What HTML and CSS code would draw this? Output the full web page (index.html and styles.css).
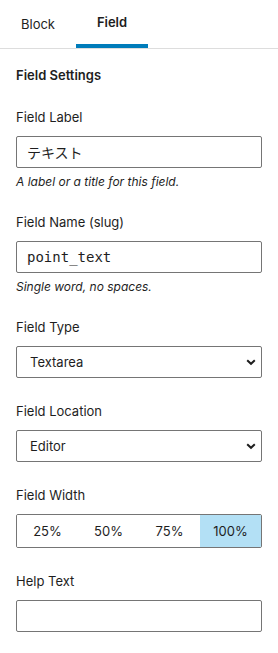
FILE: index.html
```html
<!DOCTYPE html>
<html lang="ja">
<head>
    <meta charset="UTF-8">
    <meta name="viewport" content="width=device-width, initial-scale=1.0">
    <title>Field Settings</title>
    <link rel="stylesheet" href="styles.css">
</head>
<body>
    <div class="sidebar">
        <div class="tabs">
            <button class="tab tab-block">Block</button>
            <button class="tab tab-field active">Field</button>
        </div>

        <div class="panel">
            <h2 class="panel-title">Field Settings</h2>

            <div class="control">
                <label class="control-label" for="fieldLabel">Field Label</label>
                <input class="text-input" id="fieldLabel" type="text" value="テキスト">
                <p class="control-help">A label or a title for this field.</p>
            </div>

            <div class="control">
                <label class="control-label" for="fieldName">Field Name (slug)</label>
                <textarea class="text-input mono" id="fieldName" rows="1" spellcheck="false">point_text</textarea>
                <p class="control-help">Single word, no spaces.</p>
            </div>

            <div class="control">
                <label class="control-label" for="fieldType">Field Type</label>
                <div class="select-wrap">
                    <select class="select-input" id="fieldType">
                        <option>Textarea</option>
                    </select>
                    <svg class="chevron" width="10" height="7" viewBox="0 0 10 7">
                        <path d="M1.2 1.2 L5 4.8 L8.8 1.2" fill="none" stroke="#1e1e1e" stroke-width="2"/>
                    </svg>
                </div>
            </div>

            <div class="control">
                <label class="control-label" for="fieldLocation">Field Location</label>
                <div class="select-wrap">
                    <select class="select-input" id="fieldLocation">
                        <option>Editor</option>
                    </select>
                    <svg class="chevron" width="10" height="7" viewBox="0 0 10 7">
                        <path d="M1.2 1.2 L5 4.8 L8.8 1.2" fill="none" stroke="#1e1e1e" stroke-width="2"/>
                    </svg>
                </div>
            </div>

            <div class="control">
                <span class="control-label">Field Width</span>
                <div class="button-group">
                    <button class="seg">25%</button>
                    <button class="seg">50%</button>
                    <button class="seg">75%</button>
                    <button class="seg selected">100%</button>
                </div>
            </div>

            <div class="control">
                <label class="control-label" for="helpText">Help Text</label>
                <input class="text-input" id="helpText" type="text" value="">
            </div>
        </div>
    </div>
</body>
</html>
```

FILE: styles.css
```css
:root {
    --text: #1e1e1e;
    --border: #757575;
    --blue: #007cba;
    --selected: #b3e0f5;
}

* {
    margin: 0;
    padding: 0;
    box-sizing: border-box;
}

body {
    background: #fff;
    color: var(--text);
    font-family: Inter, "Noto Sans", "Noto Sans CJK JP", sans-serif;
    font-size: 13px;
}

.sidebar {
    width: 278px;
}

.tabs {
    display: flex;
    height: 49px;
    border-bottom: 1px solid #dddddd;
}

.tab {
    background: none;
    border: none;
    border-bottom: 4px solid transparent;
    font-family: inherit;
    font-size: 13px;
    color: var(--text);
    height: 48px;
    padding-top: 3px;
}

.tab-block {
    width: 76px;
}

.tab-field {
    width: 72px;
}

.tab.active {
    font-weight: 600;
    border-bottom-color: var(--blue);
    padding-top: 0;
}

.panel {
    padding: 17px 16px 16px;
}

.panel-title {
    font-size: 13px;
    font-weight: 600;
    line-height: 18px;
    margin-bottom: 24px;
}

.control {
    margin-bottom: 24px;
}

.control-label {
    display: block;
    line-height: 18px;
    margin-bottom: 10px;
}

.text-input,
.select-input {
    display: block;
    width: 100%;
    height: 32px;
    border: 1px solid var(--border);
    border-radius: 2px;
    background: #fff;
    color: var(--text);
    font-family: Inter, "Noto Sans CJK JP", sans-serif;
    font-size: 14px;
    line-height: 20px;
    padding: 5px 10px;
    outline: none;
}

.text-input.mono {
    font-family: "DejaVu Sans Mono", "Liberation Mono", monospace;
    font-size: 14px;
    line-height: 20px;
    padding: 5px 10px;
    resize: none;
    overflow: hidden;
    white-space: nowrap;
}

.control-help {
    font-size: 12px;
    font-style: italic;
    line-height: 16px;
    margin-top: 6px;
    margin-bottom: -1px;
}

.select-wrap {
    position: relative;
}

.select-input {
    appearance: none;
    -webkit-appearance: none;
    font-size: 13px;
    padding: 0 12px 0 13px;
}

.chevron {
    position: absolute;
    right: 6px;
    top: 13px;
    pointer-events: none;
}

.button-group {
    display: grid;
    grid-template-columns: repeat(4, 1fr);
    height: 34px;
    border: 1px solid var(--border);
    border-radius: 2px;
    overflow: hidden;
}

.seg {
    background: #fff;
    border: none;
    font-family: inherit;
    font-size: 13px;
    color: var(--text);
}

.seg.selected {
    background: var(--selected);
}
```
